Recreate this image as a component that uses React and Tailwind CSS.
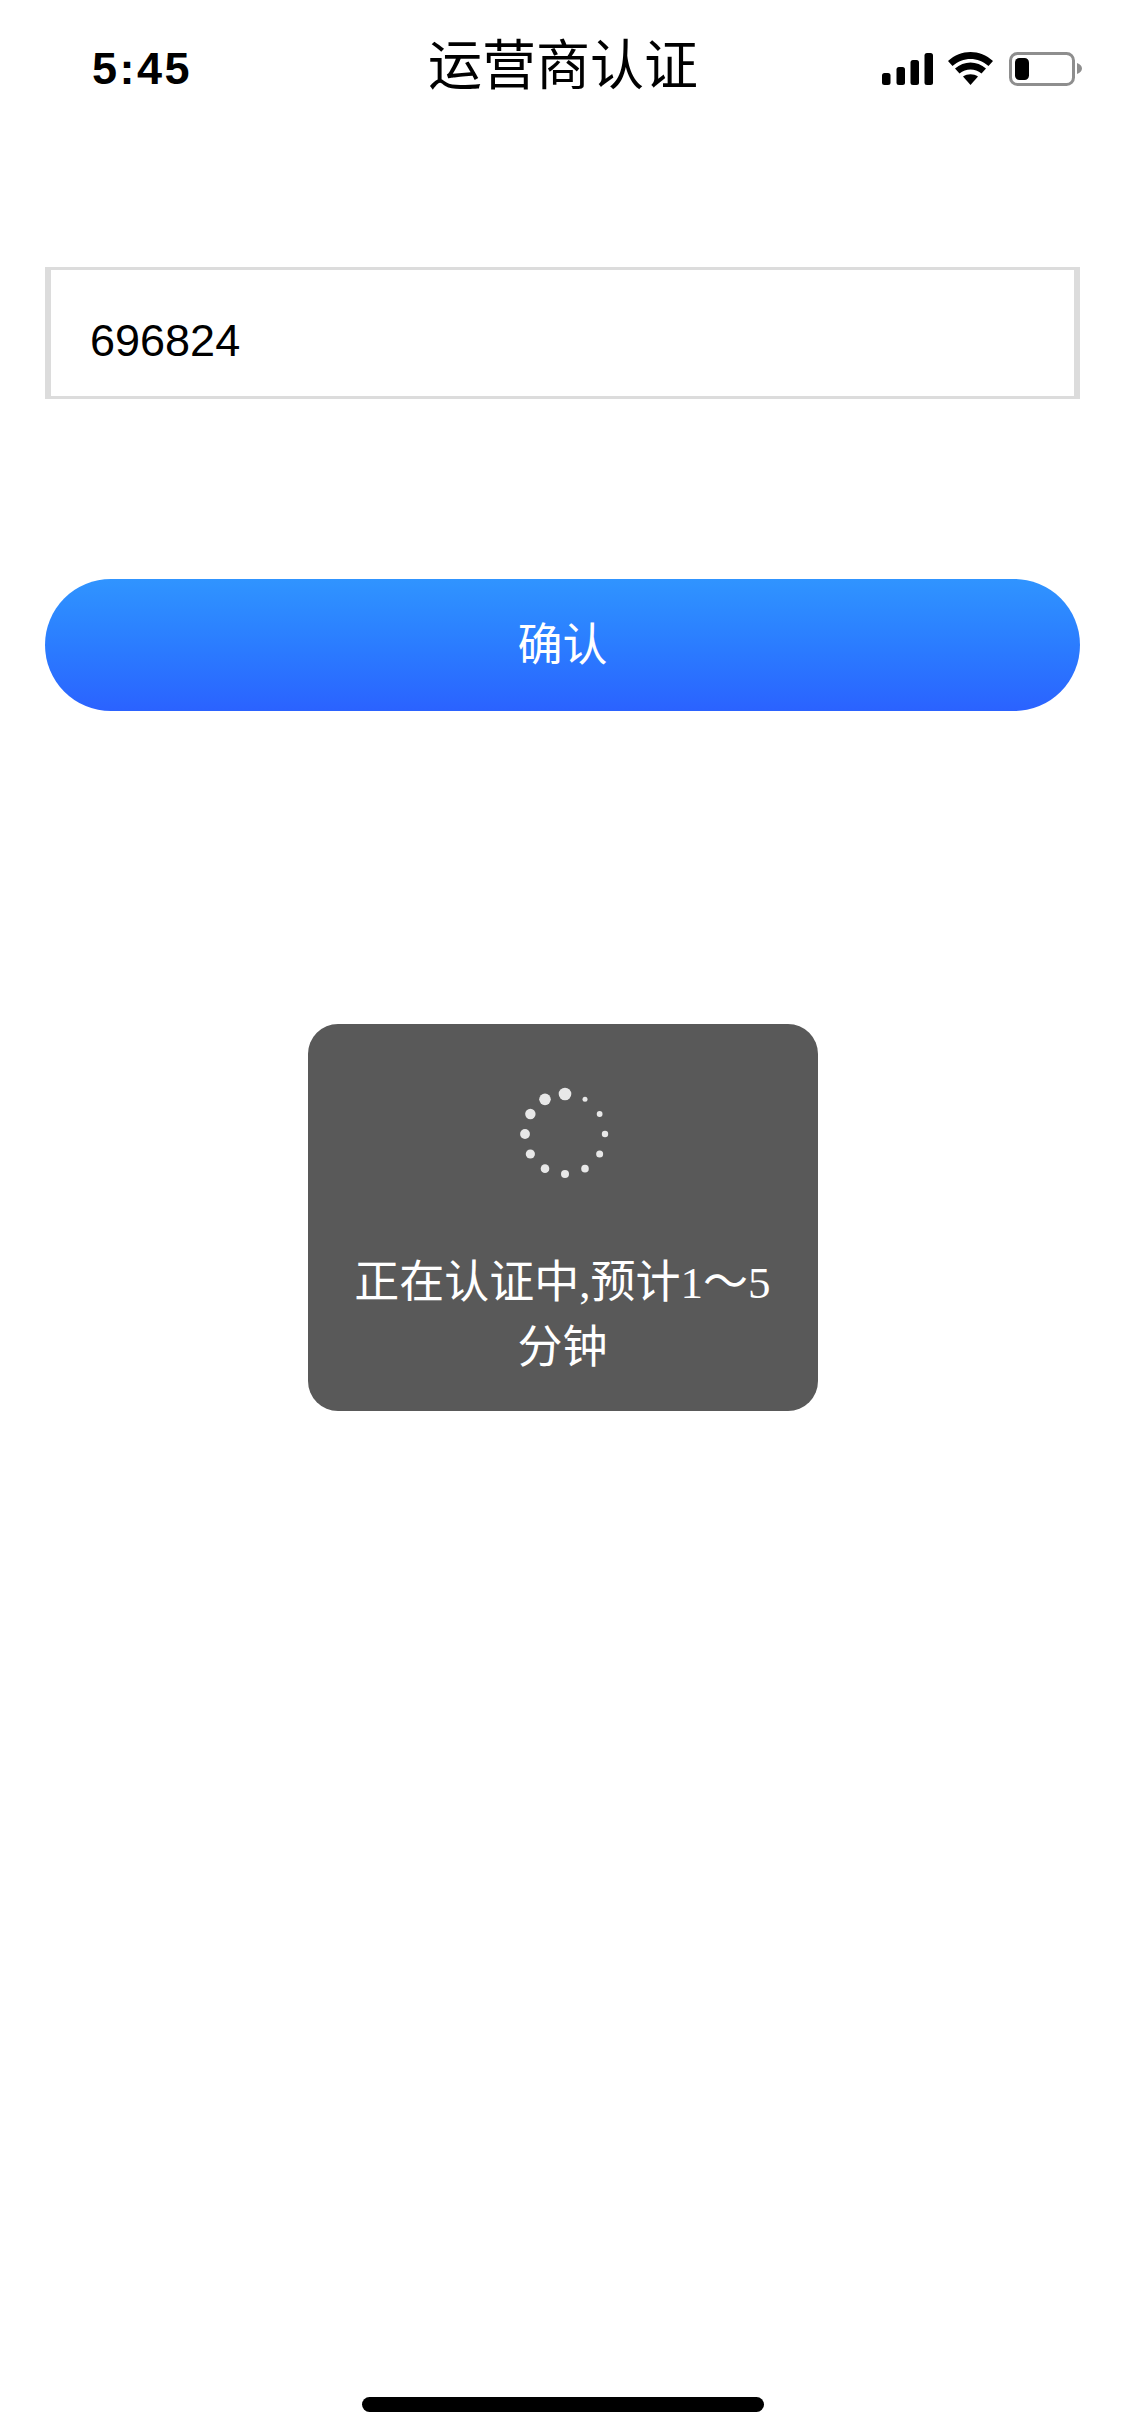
import React from "react";

const dots = [6.3, 5.8, 5.2, 4.9, 4.6, 4.3, 4, 3.8, 3.5, 3.2, 2.9, 2.5];

function Spinner() {
  return (
    <svg width="100" height="100" viewBox="-50 -50 100 100" className="block">
      {dots.map((r, i) => {
        const a = (i * Math.PI * 2) / 12;
        const cx = -Math.sin(a) * 40;
        const cy = -Math.cos(a) * 40;
        return <circle key={i} cx={cx} cy={cy} r={r} fill="#e8e8e8" />;
      })}
    </svg>
  );
}

function StatusIcons() {
  return (
    <svg width="200" height="36" viewBox="882 51 200 36" className="block">
      <rect x="882" y="73" width="8.5" height="12" rx="2.5" fill="#000" />
      <rect x="896.5" y="67" width="8.5" height="18" rx="2.5" fill="#000" />
      <rect x="910.5" y="60" width="8.5" height="25" rx="2.5" fill="#000" />
      <rect x="924.5" y="53" width="8.5" height="32" rx="2.5" fill="#000" />
      <path d="M948 61 C961 49 980 49 993 61 L988.5 66 C978 56.5 963 56.5 952.500 66 Z" fill="#000" />
      <path d="M955 68.500 C964 60.500 977 60.500 986 68.500 L981.500 73.500 C975 68 966 68 959.500 73.500 Z" fill="#000" />
      <path d="M963 76.500 C967.500 73.500 973.500 73.500 978 76.500 L970.500 85 Z" fill="#000" />
      <rect x="1010.500" y="53.500" width="63" height="31" rx="7" fill="none" stroke="#8e8e8e" strokeWidth="3" />
      <rect x="1015" y="58" width="14" height="22" rx="4.500" fill="#000" />
      <path d="M1077 63 C1080 64 1082 66 1082 68.500 C1082 71 1080 73 1077 74 Z" fill="#8e8e8e" />
    </svg>
  );
}

export default function App() {
  return (
    <div className="w-[1125px] h-[2436px] bg-white flex flex-col font-['Liberation_Sans','Noto_Sans_CJK_SC',sans-serif]">
      <header className="h-[132px] pt-[34px] flex items-start">
        <div className="w-[428px] pl-[92px] pt-[13px] text-[45px] leading-[44px] font-bold tracking-[2.5px] text-black">5:45</div>
        <div className="w-[269px] text-center text-[54px] leading-[64px] font-normal text-black whitespace-nowrap">运营商认证</div>
        <div className="ml-[185px] pt-[17px]"><StatusIcons /></div>
      </header>

      <div className="mx-[45px] mt-[135px] h-[132px] box-border border-y-[3px] border-x-[6px] border-[#dcdcdc] flex items-center pl-[39px] pt-[16px]">
        <input readOnly value="696824" className="w-full bg-transparent outline-none text-[45px] leading-[52px] text-black" />
      </div>

      <button className="mx-[45px] mt-[180px] h-[132px] pt-[2px] rounded-[66px] bg-gradient-to-b from-[#3094ff] to-[#2b62ff] text-white text-[45px] font-normal leading-[52px]">确认</button>

      <div className="self-center mt-[313px] w-[510px] h-[387px] rounded-[30px] bg-[#595959] flex flex-col items-center pt-[60px]">
        <div className="ml-[4px]"><Spinner /></div>
        <p className="mt-[67px] px-[40px] text-center text-white text-[45px] leading-[65px] font-normal font-['Liberation_Serif','Noto_Sans_CJK_SC',serif]">正在认证中,预计1～5分钟</p>
      </div>

      <div className="mt-auto mb-[24px] self-center w-[402px] h-[15px] rounded-full bg-black" />
    </div>
  );
}
